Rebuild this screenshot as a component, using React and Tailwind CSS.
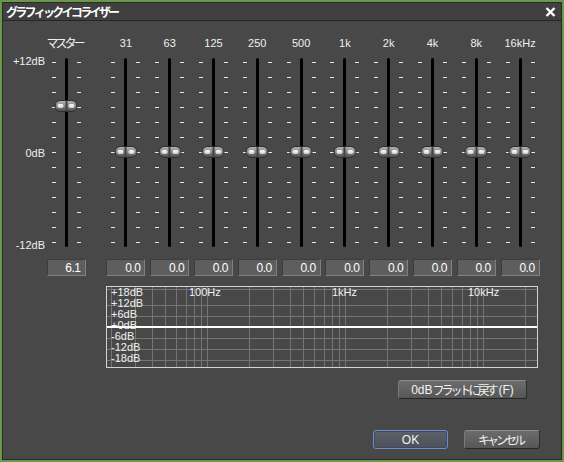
import React from "react";

const bands = ["31", "63", "125", "250", "500", "1k", "2k", "4k", "8k", "16kHz"];
const jp = { fontFamily: '"Noto Sans CJK JP", "Liberation Sans", sans-serif' };

// grid frequencies for the response graph (log scale)
const freqs = [];
[10, 100, 1000, 10000].forEach((d) => {
  for (let i = 1; i <= 9; i++) {
    const f = d * i;
    if (f >= 20 && f <= 20000) freqs.push(f);
  }
});
const fx = (f) => 238 + 138 * Math.log10(f / 1000);

function Ticks() {
  return (
    <div className="flex flex-col gap-[14px] pt-[6px]">
      {Array.from({ length: 13 }).map((_, i) => (
        <div key={i} className="w-[4px] h-[1px] bg-[#e8e8e8]" />
      ))}
    </div>
  );
}

function Knob({ value }) {
  return (
    <div
      className="absolute left-1/2 -translate-x-1/2 w-[23px] h-[12px] rounded-full border border-[#2e2e2e] bg-gradient-to-b from-[#b4b4b4] via-[#858585] to-[#4e4e4e] flex items-center justify-between px-[2px]"
      style={{ top: 96 - value * 7.5 - 6 }}
    >
      <div className="w-[6px] h-[4px] rounded-full bg-gradient-to-b from-[#ffffff] to-[#cfcfcf]" />
      <div className="w-[2px] h-[10px] bg-[#444444]" />
      <div className="w-[6px] h-[4px] rounded-full bg-gradient-to-b from-[#ffffff] to-[#cfcfcf]" />
    </div>
  );
}

function Slider({ label, value, text, isJp }) {
  return (
    <div className="flex flex-col items-center">
      <div
        className={
          "h-[14px] leading-[14px] text-[11px] text-[#f0f0f0] whitespace-nowrap " +
          (isJp ? "text-[12px] tracking-[-3px] pr-[3px]" : "")
        }
        style={isJp ? jp : undefined}
      >
        {label}
      </div>
      <div className="relative mt-[6px] h-[192px] flex gap-[9px]">
        <Ticks />
        <div className="mt-[2px] w-[3px] h-[189px] rounded-full bg-black" />
        <Ticks />
        <Knob value={value} />
      </div>
      <div className="mt-[11px] w-[39px] h-[17px] bg-[#5e5e5e] border border-t-[#3c3c3c] border-l-[#3c3c3c] border-b-[#808080] border-r-[#808080] flex items-center justify-end pr-[4px] text-[12px] tracking-[-0.5px] text-white">
        {text}
      </div>
    </div>
  );
}

function Button({ children, className = "", focus }) {
  return (
    <div
      className={
        "h-[19px] rounded-[3px] flex items-center justify-center text-[12px] text-[#f2f2f2] border " +
        (focus
          ? "border-[#6f8fc0] bg-gradient-to-b from-[#5c6068] to-[#4c5058] shadow-[inset_0_0_0_1px_#3a4a66] "
          : "border-t-[#8c8c8c] border-l-[#7a7a7a] border-b-[#262626] border-r-[#2c2c2c] bg-gradient-to-b from-[#6c6c6c] to-[#565656] ") +
        className
      }
    >
      {children}
    </div>
  );
}

export default function App() {
  return (
    <div
      className="w-[564px] h-[462px] border-2 border-[#6a9848] bg-[#484848] overflow-hidden"
      style={{ fontFamily: '"Liberation Sans", "Noto Sans CJK JP", sans-serif' }}
    >
      <div className="h-full flex flex-col border border-[#2a2a2a]">
        {/* title bar */}
        <div className="h-[18px] shrink-0 bg-[#404040] border-b border-[#262626] flex items-center justify-between pl-[3px] pr-[5px]">
          <span className="text-[12px] font-bold tracking-[-2.7px] text-white leading-none" style={jp}>
            グラフィックイコライザー
          </span>
          <svg width="11" height="10" viewBox="0 0 11 10">
            <path d="M1.5 1 L9.5 9 M9.5 1 L1.5 9" stroke="#ffffff" strokeWidth="2.4" />
          </svg>
        </div>

        {/* sliders */}
        <div className="flex pt-[15px]">
          <div className="w-[43px] flex flex-col items-end pr-[1px] text-[11px] text-[#f0f0f0]">
            <div className="h-[20px]" />
            <div className="flex flex-col items-end gap-[80px] mt-[-1px]">
              <div className="h-[12px] leading-[12px]">+12dB</div>
              <div className="h-[12px] leading-[12px]">0dB</div>
              <div className="h-[12px] leading-[12px]">-12dB</div>
            </div>
          </div>
          <div className="w-[40px]">
            <Slider label="マスター" value={6.1} text="6.1" isJp />
          </div>
          <div className="w-[18px]" />
          {bands.map((b) => (
            <div key={b} className="w-[43.8px] flex justify-center">
              <Slider label={b} value={0} text="0.0" />
            </div>
          ))}
        </div>

        {/* response graph */}
        <div className="relative mt-[10px] ml-[103px] w-[432px] h-[82px] border border-[#d4d4d4]">
          <svg className="absolute inset-0" width="430" height="80" shapeRendering="crispEdges">
            {freqs.map((f) => (
              <line key={f} x1={Math.round(fx(f)) + 0.5} x2={Math.round(fx(f)) + 0.5} y1="0" y2="80" stroke="#747474" />
            ))}
            {[2, 18, 29, 51, 62, 73].map((y) => (
              <line key={y} x1="0" x2="430" y1={y + 0.5} y2={y + 0.5} stroke="#747474" />
            ))}
          </svg>
          <div className="relative flex flex-col pl-[4px] text-[11px] leading-[11px] text-[#f0f0f0]">
            <div>+18dB</div>
            <div>+12dB</div>
            <div>+6dB</div>
            <div>+0dB</div>
            <div>-6dB</div>
            <div>-12dB</div>
            <div>-18dB</div>
          </div>
          <div className="absolute left-0 right-0 top-[39px] h-[2px] bg-white" />
          <div className="absolute top-0 left-[82px] text-[11px] leading-[11px] text-[#f0f0f0]">100Hz</div>
          <div className="absolute top-0 left-[225px] text-[11px] leading-[11px] text-[#f0f0f0]">1kHz</div>
          <div className="absolute top-0 left-[361px] text-[11px] leading-[11px] text-[#f0f0f0]">10kHz</div>
        </div>

        {/* flat button */}
        <div className="mt-[12px] ml-[395px]">
          <Button className="w-[129px]">
            0dB<span style={jp} className="tracking-[-3px] pr-[3px]">フラットに戻す</span>(F)
          </Button>
        </div>

        {/* OK / Cancel */}
        <div className="mt-[31px] ml-[370px] flex gap-[16px]">
          <Button className="w-[75px]" focus>
            OK
          </Button>
          <Button className="w-[76px]">
            <span style={jp} className="tracking-[-3px] pr-[3px]">キャンセル</span>
          </Button>
        </div>
      </div>
    </div>
  );
}
